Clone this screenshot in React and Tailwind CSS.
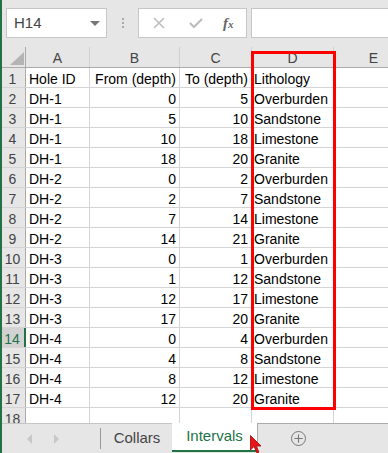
import { Plus } from "lucide-react";

const columns = [
  { key: "A", width: "w-[64px]" },
  { key: "B", width: "w-[90px]" },
  { key: "C", width: "w-[72px]" },
  { key: "D", width: "w-[82px]" },
  { key: "E", width: "w-[80px]" },
];

const intervals = [
  ["DH-1", 0, 5, "Overburden"],
  ["DH-1", 5, 10, "Sandstone"],
  ["DH-1", 10, 18, "Limestone"],
  ["DH-1", 18, 20, "Granite"],
  ["DH-2", 0, 2, "Overburden"],
  ["DH-2", 2, 7, "Sandstone"],
  ["DH-2", 7, 14, "Limestone"],
  ["DH-2", 14, 21, "Granite"],
  ["DH-3", 0, 1, "Overburden"],
  ["DH-3", 1, 12, "Sandstone"],
  ["DH-3", 12, 17, "Limestone"],
  ["DH-3", 17, 20, "Granite"],
  ["DH-4", 0, 4, "Overburden"],
  ["DH-4", 4, 8, "Sandstone"],
  ["DH-4", 8, 12, "Limestone"],
  ["DH-4", 12, 20, "Granite"],
];

function FormulaBar() {
  return (
    <div className="flex h-[47px] items-start bg-[#e6e6e6] pt-2 pl-[6px]">
      <div className="flex h-[30px] w-[101px] items-center justify-between border border-[#c6c6c6] bg-white pl-[7px] pr-[6px] text-[15px] text-[#444]">
        <span>H14</span>
        <span className="h-0 w-0 border-x-[5px] border-t-[5px] border-x-transparent border-t-[#777]" />
      </div>
      <div className="flex h-[30px] w-[31px] flex-col items-center justify-center gap-[2px]">
        <span className="h-[2px] w-[2px] bg-[#aaa]" />
        <span className="h-[2px] w-[2px] bg-[#aaa]" />
        <span className="h-[2px] w-[2px] bg-[#aaa]" />
      </div>
      <div className="flex h-[30px] w-[109px] items-center border border-[#c6c6c6] bg-white">
        <svg width="12" height="12" viewBox="0 0 12 12" className="ml-[14px]">
          <path d="M1 1 L11 11 M11 1 L1 11" stroke="#bdbdbd" strokeWidth="1.6" fill="none" />
        </svg>
        <svg width="14" height="12" viewBox="0 0 14 12" className="ml-[24px]">
          <path d="M1 6 L5 10 L13 2" stroke="#bdbdbd" strokeWidth="2.2" fill="none" />
        </svg>
        <span className="ml-[20px] font-['Liberation_Serif',serif] text-[15px] font-bold italic text-[#666]">
          f<span className="text-[11px]">x</span>
        </span>
      </div>
      <div className="ml-[4px] h-[30px] flex-1 border border-r-0 border-[#c6c6c6] bg-white" />
    </div>
  );
}

function HeaderRow() {
  return (
    <div className="flex h-[21px] border-b border-[#ababab] bg-[#e6e6e6] text-[14px] text-[#444]">
      <div className="relative w-[26px] shrink-0 border-r border-[#ababab]">
        <span className="absolute bottom-[2px] right-[1px] h-0 w-0 border-b-[13px] border-l-[14px] border-b-[#b4b4b4] border-l-transparent" />
      </div>
      {columns.map((col) => (
        <div
          key={col.key}
          className={`${col.width} flex shrink-0 items-end justify-center border-r border-[#d0d0d0] pb-[1px] leading-[16px]`}
        >
          {col.key}
        </div>
      ))}
    </div>
  );
}

function RowHeader({ n, active }) {
  return (
    <div
      className={`flex w-[26px] shrink-0 items-end justify-center text-[14px] ${
        active
          ? "border-r-2 border-[#217346] bg-[#d2d2d2] text-[#217346]"
          : "border-r border-[#ababab] bg-[#e6e6e6] text-[#444]"
      }`}
    >
      {n}
    </div>
  );
}

function DataRow({ n, cells }) {
  return (
    <div className="flex h-[20px] border-b border-[#d4d4d4] text-[14px] leading-[16px] text-black">
      <RowHeader n={n} active={n === 14} />
      <div className="flex w-[64px] shrink-0 items-end border-r border-[#d4d4d4] pl-[3px]">{cells[0]}</div>
      <div className="flex w-[90px] shrink-0 items-end justify-end border-r border-[#d4d4d4] pr-[3px]">{cells[1]}</div>
      <div className="flex w-[72px] shrink-0 items-end justify-end border-r border-[#d4d4d4] pr-[3px]">{cells[2]}</div>
      <div className="flex w-[82px] shrink-0 items-end border-r border-[#d4d4d4] pl-[2px]">{cells[3]}</div>
      <div className="w-[80px] shrink-0 border-r border-[#d4d4d4]" />
    </div>
  );
}

function SheetTabs() {
  return (
    <div className="relative flex h-[30px] bg-[#e6e6e6] text-[15px]">
      <div className="flex w-[172px] border-t border-[#c6c6c6]">
        <div className="my-[4px] flex w-[101px] items-center gap-[22px] border-r border-[#999] pl-[27px]">
          <span className="h-0 w-0 border-y-[5px] border-r-[5px] border-y-transparent border-r-[#c8c8c8]" />
          <span className="h-0 w-0 border-y-[5px] border-l-[5px] border-y-transparent border-l-[#c8c8c8]" />
        </div>
        <div className="flex flex-1 items-center justify-center pl-[1px] text-[#444]">Collars</div>
      </div>
      <div className="flex h-[29px] w-[85px] items-center justify-center border-b-2 border-[#217346] bg-white text-[#217346]">
        Intervals
      </div>
      <div className="flex flex-1 items-center border-l border-t border-[#ababab] pl-[33px]">
        <Plus size={15} strokeWidth={2} className="rounded-full border border-[#777] text-[#777]" />
      </div>
      <svg width="12" height="19" viewBox="0 0 12 19" className="absolute left-[250px] top-[12px]">
        <path d="M0.5 0.5 L0.5 15 L4 11.5 L7 18 L9 17 L6 11 L11 11 Z" fill="#e8141a" stroke="#a00" strokeWidth="0.8" />
      </svg>
    </div>
  );
}

export default function App() {
  return (
    <div className="h-[453px] w-[388px] overflow-hidden border-l-2 border-[#217346] bg-white font-['Liberation_Sans',sans-serif]">
      <div className="-ml-[2px]">
        <FormulaBar />
      </div>
      <div className="relative -ml-[2px] h-[376px] overflow-hidden">
        <HeaderRow />
        <DataRow n={1} cells={["Hole ID", "From (depth)", "To (depth)", "Lithology"]} />
        {intervals.map((cells, i) => (
          <DataRow key={i} n={i + 2} cells={cells} />
        ))}
        <DataRow n={18} cells={["", "", "", ""]} />
        <div className="absolute left-[251px] top-[4px] h-[359px] w-[85px] border-[3px] border-[#ff0000]" />
      </div>
      <div className="-ml-[2px]">
        <SheetTabs />
      </div>
    </div>
  );
}
